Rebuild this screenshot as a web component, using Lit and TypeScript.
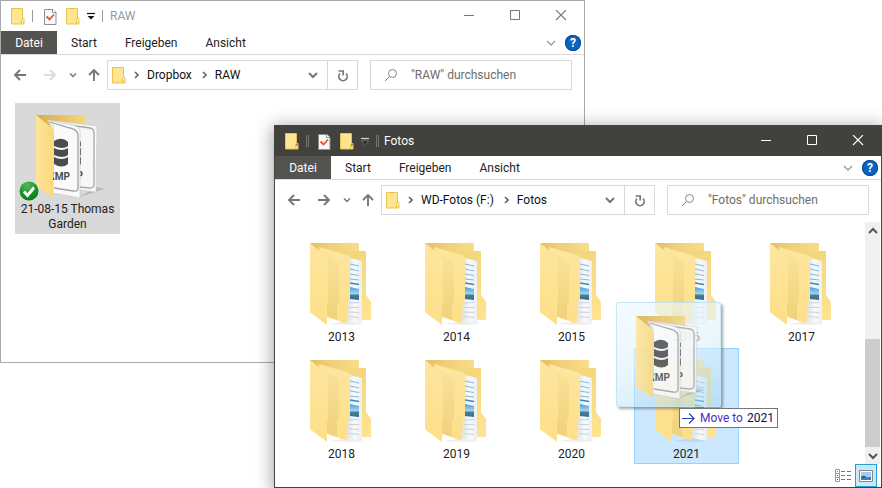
import { LitElement, html, css, svg, nothing } from "lit";
import { customElement, property } from "lit/decorators.js";

const smallFolder = html`<svg class="ico" width="14" height="17" viewBox="0 0 14 17" aria-hidden="true">
  <path d="M1 1h10.5v12.5l1.500-2V16H1z" fill="#ffe591"></path>
  <path d="M.5.5h11v10h1.500v5.500H.5z" fill="none" stroke="#e9c34c"></path>
  <path d="M10.500 16v-4.500l1-1" fill="none" stroke="#e9c34c"></path>
</svg>`;

const checkDoc = html`<svg class="ico" width="13" height="17" viewBox="0 0 13 17" aria-hidden="true">
  <path d="M.5 1.500h8.500l3 3v12H.5z" fill="#f7f8fa" stroke="#8b8f96"></path>
  <path d="M8.500 1v3.500H12" fill="#fff" stroke="#8b8f96"></path>
  <path d="M2.500 8.500l3 3 4.500-5" fill="none" stroke="#e8581c" stroke-width="1.800"></path>
</svg>`;

const chevron = (dir: "down" | "right" | "up", w: number, stroke: number) => {
  const h = w / 2;
  const pts =
    dir === "down" ? `1,${6 - h / 2} ${1 + h},${6 + h / 2} ${1 + w},${6 - h / 2}`
    : dir === "up" ? `1,${6 + h / 2} ${1 + h},${6 - h / 2} ${1 + w},${6 + h / 2}`
    : `1,${6 - h} ${1 + h},6 1,${6 + h}`;
  const width = dir === "right" ? Math.ceil(h) + 2 : w + 2;
  return html`<svg class="ico" width=${width} height="12" viewBox="0 0 ${width} 12" aria-hidden="true">
    <polyline points=${pts} fill="none" stroke="currentColor" stroke-width=${stroke}></polyline>
  </svg>`;
};

const arrow = (dir: "left" | "right" | "up") => {
  const d = { left: "M13 7H2M7 2L2 7l5 5", right: "M1 7h11M7 2l5 5-5 5", up: "M7 13V2M2 7l5-5 5 5" }[dir];
  return html`<svg class="ico" width="14" height="14" viewBox="0 0 14 14" aria-hidden="true">
    <path d=${d} fill="none" stroke="currentColor" stroke-width="1.900"></path>
  </svg>`;
};

const yearFolder = html`<svg class="pic" width="96" height="96" viewBox="0 0 96 96" aria-hidden="true">
  <defs>
    <linearGradient id="yb" x1="0" y1="0" x2="0" y2="1"><stop offset="0" stop-color="#f4d77c"></stop><stop offset="1" stop-color="#ffe391"></stop></linearGradient>
    <linearGradient id="yc" x1="0" y1="0" x2="0" y2="1"><stop offset="0" stop-color="#fde6a0"></stop><stop offset="1" stop-color="#fddf88"></stop></linearGradient>
    <linearGradient id="yt" x1="0" y1="0" x2="1" y2="0"><stop offset="0" stop-color="#e3c15f"></stop><stop offset=".4" stop-color="#efcf77"></stop><stop offset="1" stop-color="#f8dd8a"></stop></linearGradient>
    <linearGradient id="ym" x1="0" y1="0" x2="0" y2="1"><stop offset="0" stop-color="#fbe29a"></stop><stop offset="1" stop-color="#f0d27a"></stop></linearGradient>
    <linearGradient id="yd" x1="0" y1="0" x2="1" y2="0"><stop offset="0" stop-color="#dfe1e4"></stop><stop offset=".5" stop-color="#f8f9fb"></stop><stop offset="1" stop-color="#eceef1"></stop></linearGradient>
    <linearGradient id="yp" x1="0" y1="0" x2="0" y2="1"><stop offset="0" stop-color="#4a9fdc"></stop><stop offset=".5" stop-color="#a3d0ee"></stop><stop offset=".65" stop-color="#4a7f86"></stop><stop offset="1" stop-color="#2a6ba8"></stop></linearGradient>
  </defs>
  <path d="M35 91l20-3 16 3-14 1z" fill="#000" opacity=".07"></path>
  <path d="M17 10h48q1 0 1 1v70L30 76z" fill="url(#yt)"></path>
  <path d="M42 18h30q1 0 1 1v43l5 7v17q0 1-1 1H55z" fill="url(#yb)"></path>
  <path d="M57 25l12 3v63l-15-3z" fill="url(#yd)"></path>
  <g fill="none" stroke="#7cbbe4">
    <path d="M57 31l9 2M57 36l9 2M57 41l9 1.500M57 46l9 1"></path>
    <path d="M57 50l9 1.500" stroke="#2f8dcb" stroke-width="1.300"></path>
    <path d="M56 70l10-.5M56 74.500h10M56 79l10 .5M56 83.500l10 1" stroke="#c9ccd0" stroke-width=".900"></path>
  </g>
  <path d="M57 54l9 2V67l-9-1z" fill="url(#yp)"></path>
  <path d="M26 14l29 8.500q2 .5 2 2.500v42l-3 3v19q0 1-2 1L34 84z" fill="url(#yc)"></path>
  <path d="M30 19l13 8q3 2 3 6v35l-2 3v16l-10-4z" fill="url(#ym)"></path>
  <path d="M17 10l16 13q2 2 2 4v41l-1 4v20L18 80q-1 0-1-2z" fill="url(#yc)"></path>
</svg>`;

const disks = (x: number) => svg`<g fill="#4c4c4c">
  <path d="M${x} 36q8-5 14 1v4q-5 4-14 0z"></path>
  <path d="M${x} 43q8 4 14 0v7q-5 4-14 0z"></path>
  <path d="M${x} 52q8 4 14 0v7q-6 5-14 0z"></path>
</g>`;

const xmpFolder = html`<svg class="pic" width="96" height="96" viewBox="0 0 96 96" aria-hidden="true">
  <defs>
    <linearGradient id="xc" x1="0" y1="0" x2="1" y2="0"><stop offset="0" stop-color="#ffe59a"></stop><stop offset="1" stop-color="#f9d77c"></stop></linearGradient>
    <linearGradient id="xt" x1="0" y1="0" x2="1" y2="0"><stop offset="0" stop-color="#d6ad48"></stop><stop offset="1" stop-color="#f3d681"></stop></linearGradient>
    <clipPath id="rear"><path d="M61 18h18v70H61z"></path></clipPath>
  </defs>
  <path d="M60 92l26-8-8-2z" fill="#000" opacity=".15"></path>
  <path d="M17 10h49v60H34z" fill="url(#xt)"></path>
  <path d="M29 15l49 6-1 66-16-2z" fill="#f7f7f7" stroke="#c9c9c9" stroke-width=".600"></path>
  <path d="M36 18l35 5q4 1 4 5v51q0 4-4 4l-11-1" fill="none" stroke="#a8a8a8" stroke-width="1.300"></path>
  <g clip-path="url(#rear)">${disks(48)}<text class="xmp" x="64" y="74" text-anchor="end">P</text></g>
  <path d="M28 15l26 5q7 2 7 6v67l-27-5V20z" fill="#fafafa" stroke="#c4c4c4" stroke-width=".600"></path>
  <path d="M31 17l20 6q8 2 8 7v53q0 4-5 3l-19-3" fill="none" stroke="#a2a2a2" stroke-width="1.300"></path>
  ${disks(35)}
  <text class="xmp" x="51" y="75" text-anchor="end">XMP</text>
  <path d="M17 10l16 13q2 2 2 4v40l-1 4v21L18 82q-1-1-1-2z" fill="url(#xc)"></path>
</svg>`;

const okBadge = html`<svg class="badge" width="20" height="20" viewBox="0 0 20 20" role="img" aria-label="Synchronisiert">
  <defs><radialGradient id="gb" cx=".4" cy=".2" r=".9"><stop offset="0" stop-color="#59b75a"></stop><stop offset=".6" stop-color="#0f9421"></stop><stop offset="1" stop-color="#087415"></stop></radialGradient></defs>
  <circle cx="10" cy="10" r="9.500" fill="url(#gb)"></circle>
  <path d="M5 10.500l3.500 4L15 6.500" fill="none" stroke="#fff" stroke-width="2.800"></path>
</svg>`;

const base = css`
  * { box-sizing: border-box; }
  button { font: inherit; color: inherit; background: none; border: 0; padding: 0; margin: 0; }
  .ico, .pic { display: block; flex: none; }
`;

@customElement("explorer-window")
class ExplorerWindow extends LitElement {
  @property() heading = "";
  @property({ type: Array }) path: string[] = [];
  @property({ type: Boolean, reflect: true }) active = false;

  static styles = [base, css`
    :host {
      display: flex; flex-direction: column; box-sizing: border-box;
      border: 1px solid #a9a9a9; background: #fff; color: #222;
    }
    :host([active]) { border-color: #43433f; box-shadow: 0 3px 16px 2px rgba(0, 0, 0, .35); }
    .title { display: flex; align-items: center; height: 30px; padding-left: 10px; color: #999; flex: none; }
    :host([active]) .title { background: #41413d; color: #fff; }
    .title h1 { font: inherit; margin: 0 0 0 7px; flex: 1; }
    .sep { width: 1px; height: 12px; background: #999; margin: 0 0 0 7px; }
    :host([active]) .sep { width: 3px; background: none; border: 1px solid #777772; border-width: 0 1px; margin-right: -2px; }
    .doc { margin-left: 11px; }
    .quick { margin-left: 9px; }
    .more { margin-left: 7px; color: #111; }
    .sys { width: 46px; height: 30px; display: grid; place-items: center; color: #777; }
    :host([active]) .sys { color: #fff; }
    .tabs { display: flex; align-items: center; height: 24px; border-bottom: 1px solid #dadada; flex: none; padding-right: 3px; }
    .tab { height: 23px; padding: 2px 14px 0; }
    .file { width: 56px; padding: 2px 0 0; background: #55534f; color: #fff; }
    .push { margin-left: auto; color: #999; }
    .help { width: 16px; height: 16px; margin-left: 9px; border-radius: 50%; background: #0a63c0; box-shadow: inset 0 0 0 1px #084a8e; color: #fff; font-weight: 700; font-size: 12px; line-height: 16px; text-align: center; }
    .nav { display: flex; align-items: center; height: 40px; margin-bottom: 2px; padding: 0 12px; flex: none; color: #777; }
    .fwd { margin-left: 16px; }
    .dim { color: #dcdcdc; }
    .hist { margin-left: 12px; }
    .up { margin-left: 10px; }
    .addr { display: flex; align-items: center; height: 30px; flex: 1; margin-left: 6px; border: 1px solid #d9d9d9; padding-left: 4px; min-width: 0; }
    .crumb { color: #111; margin-left: 8px; padding-right: 2px; }
    .arrow { margin-left: 8px; color: #666; }
    .drop { margin-left: auto; padding: 0 9px; }
    .reload { width: 30px; height: 28px; border-left: 1px solid #d9d9d9; display: grid; place-items: center; }
    .search { display: flex; align-items: center; width: 202px; height: 30px; margin-left: 12px; padding-left: 13px; border: 1px solid #d9d9d9; }
    .search input { font: inherit; color: #666; border: 0; outline: 0; padding: 0; margin-left: 13px; width: 140px; background: none; }
    .search input::placeholder { color: #6d6d6d; opacity: 1; }
  `];

  render() {
    return html`
      <header class="title">
        ${smallFolder}<span class="sep"></span>
        <button class="doc" aria-label="Eigenschaften">${checkDoc}</button>
        <button class="quick" aria-label="Neuer Ordner">${smallFolder}</button>
        <button class="more" aria-label="Symbolleiste anpassen">
          <svg class="ico" width="8" height="8" viewBox="0 0 8 8">
            <path d="M0 1.500h8" stroke=${this.active ? "#ddd" : "#111"} stroke-width="1.200"></path>
            <path d="M.5 4h7L4 7.500z" fill="#111" stroke=${this.active ? "#bbb" : "none"} stroke-width=".500"></path>
          </svg>
        </button>
        <span class="sep"></span>
        <h1>${this.heading}</h1>
        <button class="sys" aria-label="Minimieren"><svg width="12" height="12"><path d="M1 5.500h10" stroke="currentColor"></path></svg></button>
        <button class="sys" aria-label="Maximieren"><svg width="12" height="12"><path d="M1.500.5h9v9h-9z" fill="none" stroke="currentColor"></path></svg></button>
        <button class="sys" aria-label="Schließen"><svg width="12" height="12"><path d="M1 0l10 10M11 0L1 10" stroke="currentColor" stroke-width="1.100"></path></svg></button>
      </header>
      <nav class="tabs">
        <button class="tab file">Datei</button>
        <button class="tab">Start</button>
        <button class="tab">Freigeben</button>
        <button class="tab">Ansicht</button>
        <button class="push" aria-label="Menüband erweitern">${chevron("down", 8, 1.3)}</button>
        <button class="help" aria-label="Hilfe">?</button>
      </nav>
      <div class="nav">
        <button aria-label="Zurück">${arrow("left")}</button>
        <button class="fwd ${this.active ? "" : "dim"}" aria-label="Vorwärts">${arrow("right")}</button>
        <button class="hist" aria-label="Verlauf">${chevron("down", 6, 1.5)}</button>
        <button class="up" aria-label="Nach oben">${arrow("up")}</button>
        <div class="addr">
          ${smallFolder}
          ${this.path.map((p) => html`<span class="arrow">${chevron("right", 6, 1.6)}</span><button class="crumb">${p}</button>`)}
          <button class="drop" aria-label="Vorherige Orte">${chevron("down", 8, 2)}</button>
          <button class="reload" aria-label="Aktualisieren">
            <svg class="ico" width="12" height="13" viewBox="0 0 12 13">
              <path d="M3 4.500A4.200 4.200 0 1 0 9 4.500" fill="none" stroke="currentColor" stroke-width="1.700"></path>
              <path d="M1.500 2h4.700V6.500" fill="none" stroke="currentColor" stroke-width="1.700"></path>
            </svg>
          </button>
        </div>
        <label class="search">
          <svg class="ico" width="14" height="14" viewBox="0 0 14 14" aria-hidden="true">
            <circle cx="8.500" cy="5.500" r="4" fill="none" stroke="#888"></circle><path d="M5.500 8.500L1 13" stroke="#888"></path>
          </svg>
          <input type="text" aria-label="Suchen" placeholder='"${this.heading}" durchsuchen'>
        </label>
      </div>
      <slot></slot>
    `;
  }
}

@customElement("app-root")
class AppRoot extends LitElement {
  static styles = [base, css`
    :host {
      display: block; position: relative; min-height: 100vh; overflow: hidden; background: #fff;
      font: 12px/15px Roboto, "Noto Sans", sans-serif; color: #000;
    }
    .back { position: absolute; inset: 0 297px 125px 0; }
    .front { position: absolute; inset: 125px 0 0 274px; }
    .body { display: flex; flex: 1; min-height: 0; }
    .items { flex: 1; display: grid; grid-template-columns: repeat(auto-fill, 105px); gap: 1px 10px; align-content: start; margin: 0; padding: 9px 0 0 14px; list-style: none; }
    .back .items { padding-top: 6px; }
    .items li { position: relative; }
    .item { display: flex; flex-direction: column; gap: 1px; width: 100%; padding: 2px 4px; line-height: 15px; text-align: center; }
    .item span { align-self: stretch; }
    .picked { background: #d9d9d9; }
    .target { background: #cce8ff; box-shadow: inset 0 0 0 1px #99d1ff; }
    .badge { position: absolute; left: 4px; top: 78px; }
    .xmp { font: bold 10px Roboto, sans-serif; fill: #4c4c4c; }
    .ghost {
      position: absolute; left: -18px; top: -46px; width: 105px; height: 105px; padding: 3px 2px; border-radius: 3px;
      border: 1px solid rgba(190, 228, 243, .8);
      background: linear-gradient(160deg, rgba(238, 249, 255, .7), rgba(222, 241, 250, .6) 50%, rgba(160, 212, 240, .5));
      box-shadow: 2px 2px 3px rgba(0, 0, 0, .35);
    }
    .ghost .pic { opacity: .85; }
    .tip { position: absolute; left: 45px; top: 60px; height: 20px; padding: 0 3px 0 2px; display: flex; align-items: center; white-space: nowrap; background: #fff; border: 1px solid #767676; color: #4b2fc4; }
    .tip svg { margin-right: 4px; }
    .tip b { font-weight: 400; color: #0b0b5e; margin-left: 4px; }
    .bar { width: 15px; margin-right: 1px; display: flex; flex-direction: column; background: #f0f0f0; color: #555; }
    .bar button { height: 17px; display: grid; place-items: center; }
    .track { flex: 1; display: grid; grid-template-rows: 100fr 108fr; }
    .thumb { grid-row: 2; background: #cdcdcd; }
    .status { display: flex; justify-content: flex-end; align-items: center; height: 23px; gap: 3px; padding-right: 4px; flex: none; }
    .on { width: 22px; height: 23px; display: grid; place-items: center; background: #cbe8f6; border: 1px solid #26a0da; }
  `];

  private years = ["2013", "2014", "2015", "2016", "2017", "2018", "2019", "2020", "2021"];
  private target = "2021";

  render() {
    return html`
      <explorer-window class="back" heading="RAW" .path=${["Dropbox", "RAW"]}>
        <div class="body">
          <ul class="items">
            <li><button class="item picked">${xmpFolder}<span>21-08-15 Thomas Garden</span></button>${okBadge}</li>
          </ul>
        </div>
      </explorer-window>
      <explorer-window class="front" heading="Fotos" active .path=${["WD-Fotos (F:)", "Fotos"]}>
        <div class="body">
          <ul class="items">
            ${this.years.map((y) => html`<li>
              <button class="item ${y === this.target ? "target" : ""}">${yearFolder}<span>${y}</span></button>
              ${y === this.target ? html`
                <div class="ghost">${xmpFolder}</div>
                <div class="tip">
                  <svg width="14" height="13" viewBox="0 0 14 13" aria-hidden="true"><path d="M0 6.500h12M7 1.500l5 5-5 5" fill="none" stroke="#2f3fc0" stroke-width="1.200"></path></svg>
                  Move to<b>${y}</b>
                </div>` : nothing}
            </li>`)}
          </ul>
          <div class="bar">
            <button aria-label="Nach oben blättern">${chevron("up", 8, 2)}</button>
            <div class="track"><div class="thumb"></div></div>
            <button aria-label="Nach unten blättern">${chevron("down", 8, 2)}</button>
          </div>
        </div>
        <footer class="status">
          <button aria-label="Details">
            <svg class="ico" width="17" height="13" viewBox="0 0 17 13">
              <g fill="#fff" stroke="#999"><path d="M.5.500h4v4h-4zM.5 4.500h4v4h-4zM.5 8.500h4v4h-4z"></path></g>
              <path d="M2 2.500h1" stroke="#2a9a4a"></path><path d="M2 6.500h1" stroke="#2a6ad0"></path><path d="M2 10.500h1" stroke="#d02a2a"></path>
              <path d="M6 2.500h4M12 2.500h4M6 6.500h4M12 6.500h4M6 10.500h4M12 10.500h4" stroke="#777"></path>
            </svg>
          </button>
          <button class="on" aria-label="Große Symbole">
            <svg class="ico" width="14" height="12" viewBox="0 0 14 12">
              <path d="M.5.500h13v11H.5z" fill="#fff" stroke="#888"></path>
              <path d="M2 2h10v8H2z" fill="#9fccf5"></path><path d="M2 6.500l3-1 3 2 4-.5v1H2z" fill="#2f6f5c"></path><path d="M2 8h10v2H2z" fill="#3f7fc0"></path>
            </svg>
          </button>
        </footer>
      </explorer-window>
    `;
  }
}
